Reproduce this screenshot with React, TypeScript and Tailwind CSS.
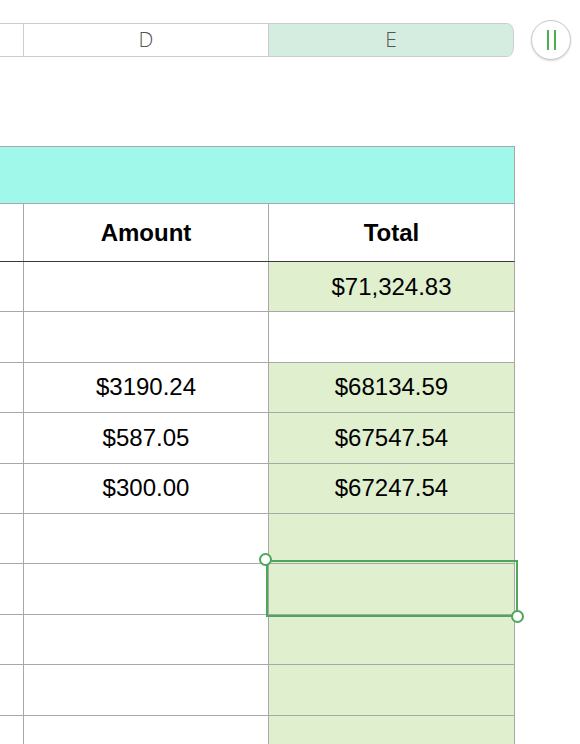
import React from 'react';

type Row = { amount?: string; total?: string; green: boolean };

const rows: Row[] = [
  { total: '$71,324.83', green: true },
  { green: false },
  { amount: '$3190.24', total: '$68134.59', green: true },
  { amount: '$587.05', total: '$67547.54', green: true },
  { amount: '$300.00', total: '$67247.54', green: true },
  { green: true },
  { green: true },
  { green: true },
  { green: true },
  { green: true },
];

const font = { fontFamily: '"Liberation Sans", Arial, sans-serif' };
const headFont = { fontFamily: '"Open Sans", "Liberation Sans", sans-serif', fontWeight: 300 };

export default function App() {
  return (
    <div className="w-[580px] h-[744px] overflow-hidden bg-white relative" style={font}>
      {/* column header strip */}
      <div className="flex items-center pt-[20px]">
        <div className="flex h-[34px] border-y border-[#cdcdcd] w-[514px] rounded-r-[8px] overflow-hidden">
          <div className="w-[24px] border-r border-[#cdcdcd] bg-white" />
          <div
            className="w-[245px] border-r border-[#cdcdcd] bg-white flex items-center justify-center text-[21px] text-[#555]"
            style={headFont}
          >
            D
          </div>
          <div
            className="flex-1 bg-[#d4ede0] border-r border-[#cdcdcd] rounded-r-[8px] flex items-center justify-center text-[21px] text-[#555]"
            style={headFont}
          >
            E
          </div>
        </div>
        <div className="ml-[17px] w-[40px] h-[40px] rounded-full border border-[#c9c9c9] bg-white shadow-[0_1px_2px_rgba(0,0,0,0.15)] flex items-center justify-center gap-[5px]">
          <div className="w-[2px] h-[20px] bg-[#4caf50]" />
          <div className="w-[2px] h-[20px] bg-[#4caf50]" />
        </div>
      </div>

      {/* table */}
      <div className="mt-[86px] w-[515px] relative">
        <div className="h-[57px] bg-[#9ff8e9] border-t border-r border-[#a8a8a8]" />
        <div className="flex h-[59px] border-y border-t-[#a8a8a8] border-b-[#3a3a3a] border-r border-r-[#a8a8a8]">
          <div className="w-[24px] border-r border-[#a8a8a8]" />
          <div className="w-[245px] border-r border-[#a8a8a8] flex items-center justify-center font-bold text-[24px] text-black">
            Amount
          </div>
          <div className="flex-1 flex items-center justify-center font-bold text-[24px] text-black">Total</div>
        </div>
        {rows.map((r, i) => (
          <div key={i} className="flex h-[50.4px] border-b border-r border-[#a8a8a8]">
            <div className="w-[24px] border-r border-[#a8a8a8]" />
            <div className="w-[245px] border-r border-[#a8a8a8] flex items-center justify-center text-[24px] text-black">
              {r.amount}
            </div>
            <div
              className={`flex-1 flex items-center justify-center text-[24px] text-black ${
                r.green ? 'bg-[#e0f0cf]' : 'bg-white'
              }`}
            >
              {r.total}
            </div>
          </div>
        ))}

        {/* selection */}
        <div className="absolute left-[266px] top-[414px] w-[252px] h-[57px] border-2 border-[#4ea65a]" />
        <div className="absolute left-[259px] top-[407px] w-[13px] h-[13px] rounded-full border-2 border-[#4ea65a] bg-white" />
        <div className="absolute left-[511px] top-[464px] w-[13px] h-[13px] rounded-full border-2 border-[#4ea65a] bg-white" />
      </div>
    </div>
  );
}
